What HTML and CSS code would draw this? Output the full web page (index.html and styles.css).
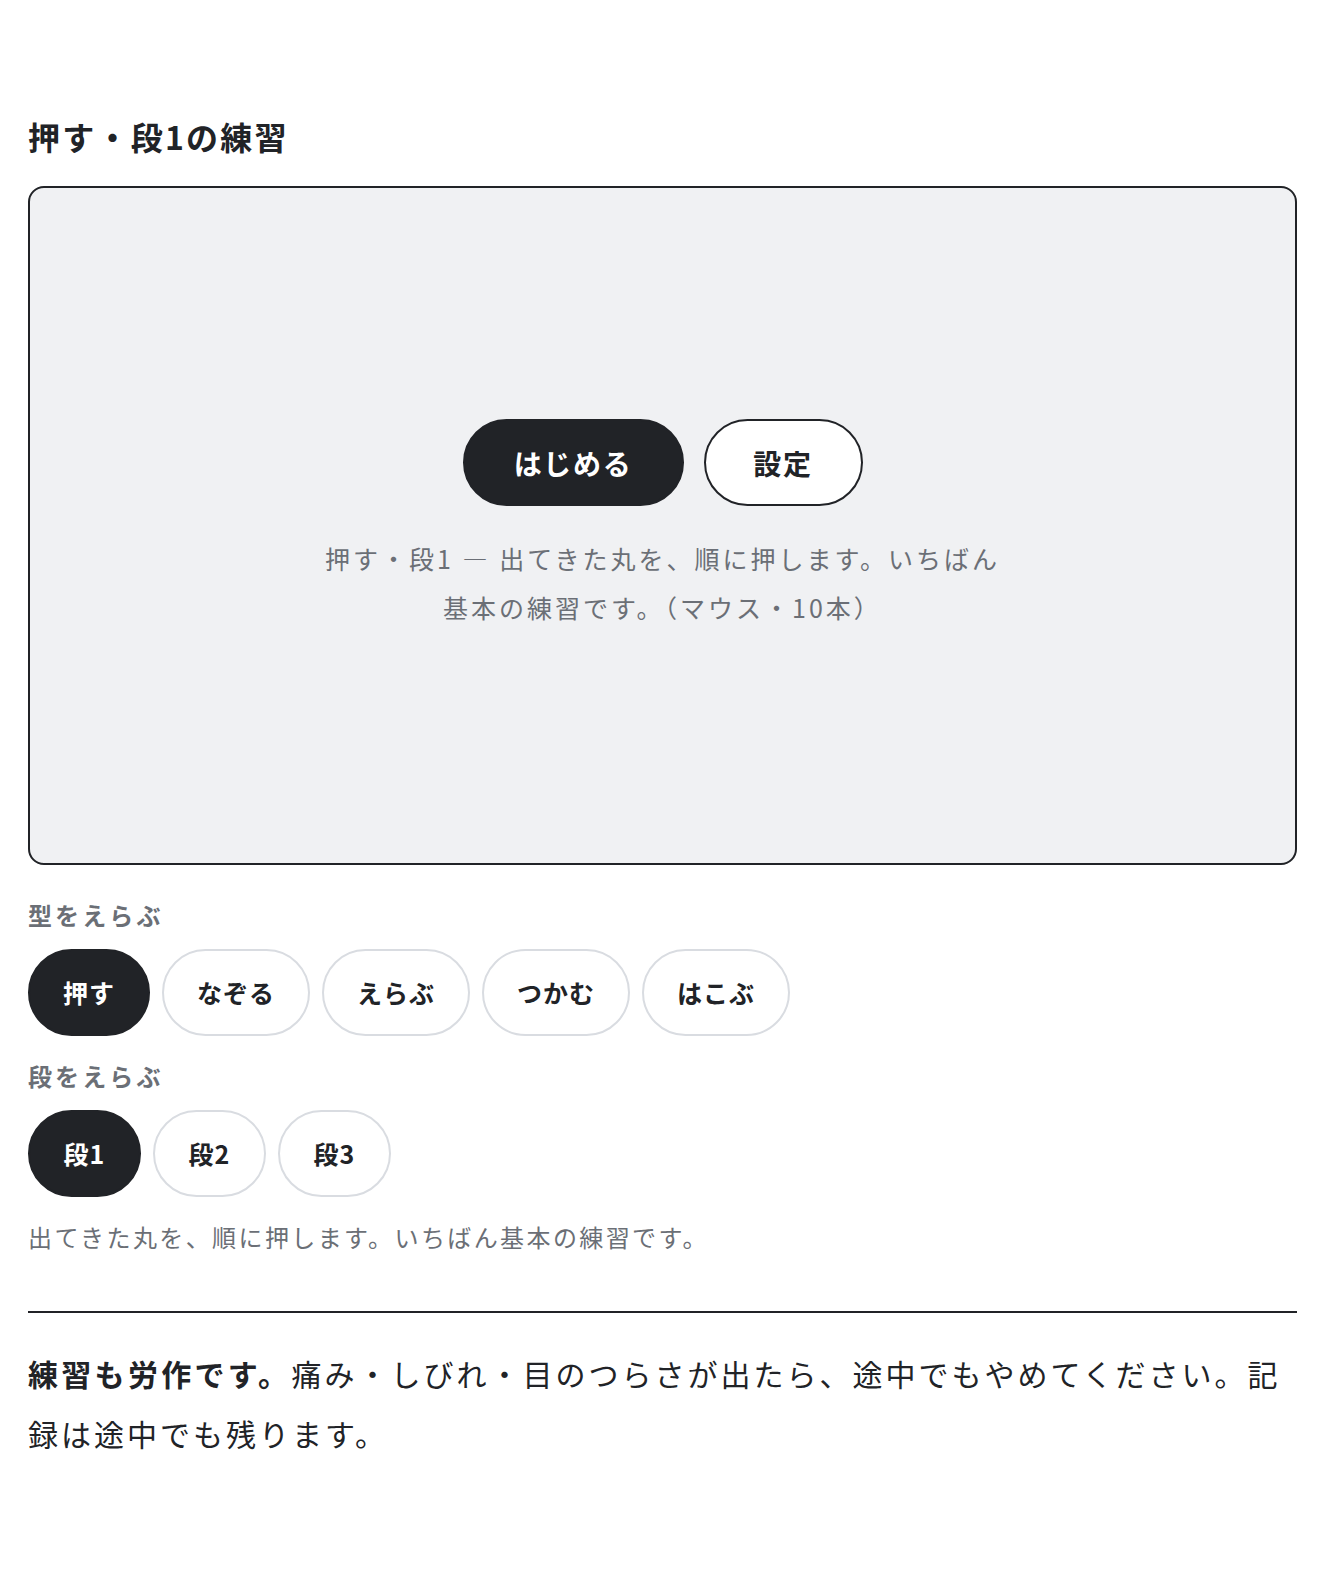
FILE: index.html
```html
<!DOCTYPE html>
<html lang="ja">
<head>
<meta charset="utf-8">
<title>押す・段1の練習</title>
<link rel="stylesheet" href="styles.css">
</head>
<body>
<main class="page">
  <h1 class="title">押す・段1の練習</h1>
  <section class="stage">
    <div class="stage-actions">
      <button class="btn btn-primary">はじめる</button>
      <button class="btn btn-outline">設定</button>
    </div>
    <p class="stage-desc">押す・段1 — 出てきた丸を、順に押します。いちばん<br>基本の練習です。（マウス・10本）</p>
  </section>
  <div class="group">
    <div class="label">型をえらぶ</div>
    <div class="chips">
      <button class="chip chip-on">押す</button>
      <button class="chip">なぞる</button>
      <button class="chip">えらぶ</button>
      <button class="chip">つかむ</button>
      <button class="chip">はこぶ</button>
    </div>
  </div>
  <div class="group">
    <div class="label">段をえらぶ</div>
    <div class="chips">
      <button class="chip chip-step chip-on">段1</button>
      <button class="chip chip-step">段2</button>
      <button class="chip chip-step">段3</button>
    </div>
  </div>
  <p class="hint">出てきた丸を、順に押します。いちばん基本の練習です。</p>
  <hr class="rule">
  <p class="note"><strong>練習も労作です。</strong>痛み・しびれ・目のつらさが出たら、途中でもやめてください。記録は途中でも残ります。</p>
</main>
</body>
</html>
```
FILE: styles.css
```css
* { box-sizing: border-box; }
html, body { margin: 0; background: #ffffff; }
body {
  font-family: "Noto Sans CJK JP", "Noto Sans", sans-serif;
  color: #212327;
}
.page {
  padding: 108px 29px 60px 28px;
}
.title {
  margin: 0;
  font-size: 32px;
  line-height: 56px;
  font-weight: 700;
  letter-spacing: 0.07em;
}
.stage {
  margin-top: 22px;
  height: 679px;
  border: 2px solid #212327;
  border-radius: 16px;
  background: #f0f1f3;
  display: flex;
  flex-direction: column;
  align-items: center;
  justify-content: center;
}
.stage-actions {
  display: flex;
  gap: 20px;
}
.btn {
  font-family: inherit;
  font-size: 28px;
  font-weight: 700;
  letter-spacing: 0.06em;
  height: 87px;
  border-radius: 44px;
  border: 2px solid #212327;
  cursor: pointer;
  line-height: 1;
}
.btn-primary {
  width: 221px;
  background: #212327;
  color: #ffffff;
}
.btn-outline {
  width: 159px;
  background: #ffffff;
  color: #212327;
}
.stage-desc {
  margin: 28px 0 0;
  text-align: center;
  color: #6b6f76;
  font-size: 25px;
  line-height: 49px;
  letter-spacing: 0.12em;
}
.group {
  margin-top: 32px;
}
.group + .group { margin-top: 22px; }
.label {
  font-size: 24px;
  font-weight: 700;
  color: #6b6f76;
  letter-spacing: 0.13em;
  line-height: 36px;
}
.chips {
  display: flex;
  gap: 12px;
  margin-top: 16px;
}
.chip {
  font-family: inherit;
  font-size: 25px;
  font-weight: 700;
  letter-spacing: 0.04em;
  height: 87px;
  padding: 0 33px;
  border-radius: 44px;
  border: 2px solid #d9dce1;
  background: #ffffff;
  color: #212327;
  cursor: pointer;
  line-height: 1;
}
.chip-step {
  min-width: 113px;
}
.chip-on {
  background: #212327;
  border-color: #212327;
  color: #ffffff;
}
.hint {
  margin: 22px 0 0;
  font-size: 24px;
  line-height: 36px;
  color: #6b6f76;
  letter-spacing: 0.1em;
}
.rule {
  margin: 56px 0 0;
  border: 0;
  border-top: 2px solid #212327;
}
.note {
  margin: 30px 0 0;
  font-size: 30px;
  line-height: 60px;
  letter-spacing: 0.1em;
}
.note strong { font-weight: 700; letter-spacing: 0.11em; }
```
